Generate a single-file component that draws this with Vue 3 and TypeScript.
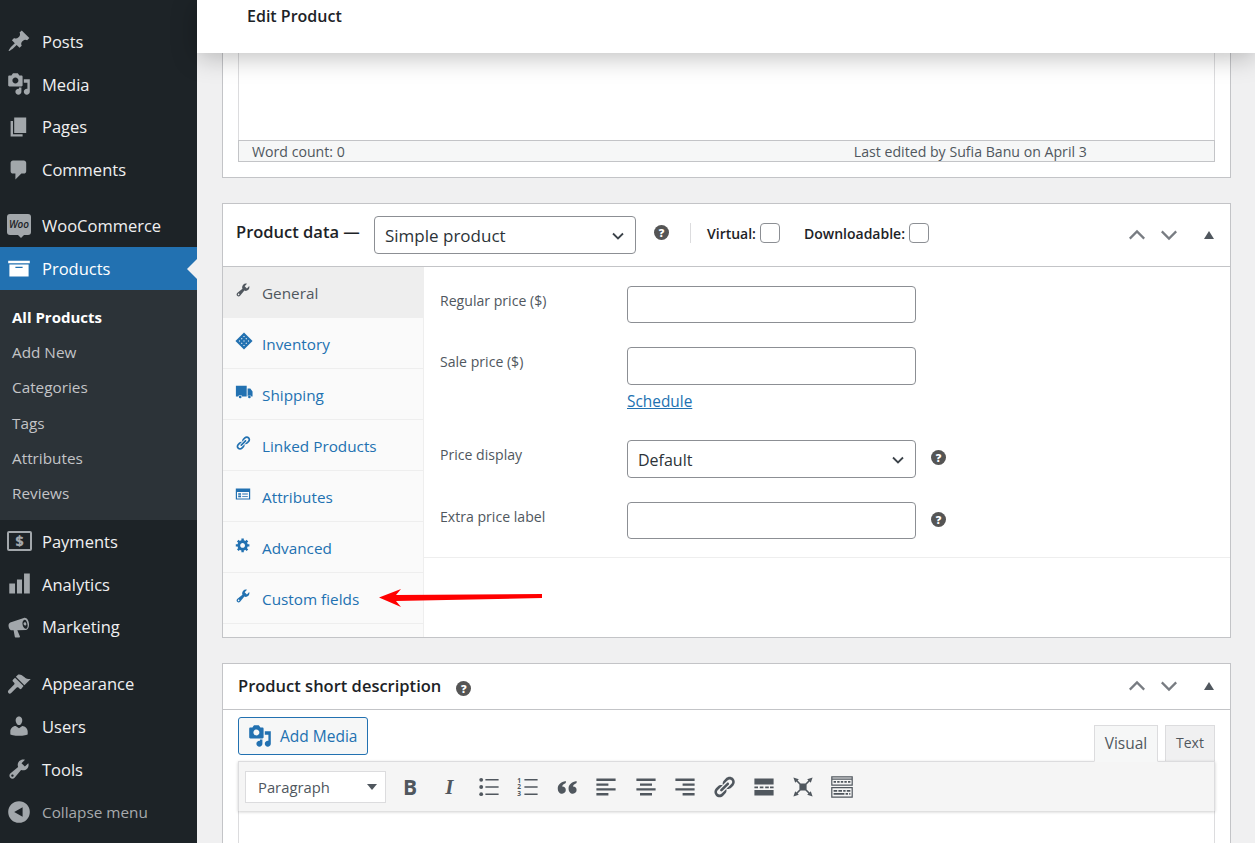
<script setup lang="ts">
const P = {
  pin: 'M10.44 3.02l1.82-1.82 6.36 6.35-1.83 1.82c-1.05-.68-2.48-.57-3.41.36l-.75.75c-.92.93-1.04 2.35-.35 3.41l-1.83 1.82-2.41-2.41-2.8 2.79c-.42.42-3.38 2.71-3.8 2.29s1.86-3.39 2.28-3.81l2.79-2.79L4.1 9.36l1.83-1.82c1.05.69 2.48.57 3.4-.36l.75-.75c.93-.92 1.05-2.35.36-3.41z',
  media: 'M13 11V4c0-.55-.45-1-1-1h-1.67L9 1H5L3.67 3H2c-.55 0-1 .45-1 1v7c0 .55.45 1 1 1h10c.55 0 1-.45 1-1zM7 4.5c1.38 0 2.5 1.12 2.5 2.5S8.38 9.5 7 9.5 4.5 8.38 4.5 7 5.62 4.5 7 4.5zM14 6h5v10.5c0 1.38-1.12 2.5-2.5 2.5S14 17.88 14 16.5s1.12-2.5 2.5-2.5c.17 0 .34.02.5.05V9h-3V6zm-4 8.05V13h2v3.5c0 1.38-1.12 2.5-2.5 2.5S7 17.88 7 16.5 8.12 14 9.5 14c.17 0 .34.02.5.05z',
  page: 'M6 15V2h10v13H6zm-1 1h8v2H3V5h2v11z',
  comment: 'M5 2h9c1.1 0 2 .9 2 2v7c0 1.1-.9 2-2 2h-2l-5 5v-5H5c-1.1 0-2-.9-2-2V4c0-1.1.9-2 2-2z',
  archive: 'M19 4v2H1V4h18zM2 7h16v10H2V7zm11 3V9H7v1h6z',
  bars: 'M1.900 9.600h4.800V18H1.900zM8.300 6.200h4.200V18H8.300zM14.200 1.200H19V18h-4.800z',
  megaphone: 'M14 2.500c2.400-.7 4 2 4.300 4.600.3 2.400-.6 5-2.600 5.500L8.600 12.700l2.200 5.300c.1.400-.2.700-.5.700H7.100c-.3 0-.6-.3-.6-.6l-1-5.300H4.200c-1.300 0-2.400-1.200-2.800-2.900-.4-1.700.2-3.100 1.300-3.600zM14.600 4c-1.500.4-2.100 2.300-1.500 4.600.6 2.200 2 3.400 3 2.800 1-.6 1.400-2.200.9-4.200-.5-2.100-1.400-3.400-2.400-3.200zm.1 2c.8-.2 1.300.4 1.400 1.200.1.800-.2 1.400-.9 1.600-.7.1-1.200-.4-1.400-1.200-.1-.8.2-1.400.9-1.600z',
  brush: 'M14.48 11.06L7.41 3.99l1.5-1.5c.5-.56 2.3-.47 3.51.32 1.21.8 1.43 1.28 2.91 2.1 1.18.64 2.45 1.26 4.45.85zm-.71.71L6.7 4.7 4.93 6.47c-.39.39-.39 1.02 0 1.41l1.06 1.06c.39.39.39 1.03 0 1.42L1.3 15.3c-.7.7-.7 1.6-.1 2.3s1.6.6 2.3-.1l4.61-4.54c.39-.39 1.03-.39 1.42 0l1.06 1.06c.39.39 1.02.39 1.41 0z',
  users: 'M10 9.25c-2.27 0-2.73-3.44-2.73-3.44C7 4.02 7.82 2 9.97 2c2.16 0 2.98 2.02 2.71 3.81 0 0-.41 3.44-2.68 3.44zm0 2.57L12.72 10c2.39 0 4.52 2.33 4.52 4.53v2.49s-3.65 1.13-7.24 1.13c-3.65 0-7.24-1.13-7.24-1.13v-2.49c0-2.25 1.94-4.48 4.47-4.48z',
  tools: 'M16.68 9.77c-1.34 1.34-3.3 1.67-4.95.99l-5.41 6.52c-.99.99-2.59.99-3.58 0s-.99-2.59 0-3.57l6.52-5.42c-.68-1.65-.35-3.61.99-4.95 1.28-1.28 3.12-1.62 4.72-1.06l-2.89 2.89 2.82 2.82 2.86-2.87c.53 1.58.18 3.39-1.08 4.65zM3.81 16.21c.4.39 1.04.39 1.43 0 .4-.4.4-1.04 0-1.43-.39-.4-1.03-.4-1.43 0-.39.39-.39 1.03 0 1.43z',
  link: 'M17.74 2.76c1.68 1.69 1.68 4.41 0 6.1l-1.53 1.52c-1.12 1.12-2.7 1.47-4.14 1.09l2.62-2.61.76-.77.76-.76c.84-.84.84-2.2 0-3.04-.84-.85-2.2-.85-3.04 0l-.77.76-3.38 3.38c-.37-1.44-.02-3.02 1.1-4.14l1.52-1.53c1.69-1.68 4.42-1.68 6.1 0zM8.59 13.43l5.34-5.34c.42-.42.42-1.1 0-1.52-.44-.43-1.13-.39-1.53 0l-5.33 5.34c-.42.42-.42 1.1 0 1.52.44.43 1.13.39 1.52 0zm-.76 2.29l4.14-4.15c.38 1.44.03 3.02-1.09 4.14l-1.52 1.53c-1.69 1.68-4.41 1.68-6.1 0-1.68-1.68-1.68-4.42 0-6.1l1.53-1.52c1.12-1.12 2.7-1.47 4.14-1.1l-4.14 4.15c-.85.84-.85 2.2 0 3.05.84.84 2.2.84 3.04 0z',
  gear: 'M18 12h-2.18c-.17.7-.44 1.35-.81 1.93l1.54 1.54-2.1 2.1-1.54-1.54c-.58.36-1.23.63-1.91.79V19H8v-2.18c-.68-.16-1.33-.43-1.91-.79l-1.54 1.54-2.12-2.12 1.54-1.54c-.36-.58-.63-1.23-.79-1.91H1V9.03h2.17c.16-.7.44-1.35.8-1.94L2.43 5.55l2.1-2.1 1.54 1.54c.58-.37 1.24-.64 1.93-.81V2h3v2.18c.68.16 1.33.43 1.91.79l1.54-1.54 2.12 2.12-1.54 1.54c.36.59.64 1.24.8 1.94H18V12zm-8.5 1.5c1.66 0 3-1.34 3-3s-1.34-3-3-3-3 1.34-3 3 1.34 3 3 3z',
  truck: 'M1 3h12v12H8a2.300 2.300 0 0 0-4.400 0H1zM14 6h3l2.500 3.500V15h-1.300a2.300 2.300 0 0 0-4.200 0zM5.800 14a1.500 1.500 0 1 1 0 3 1.500 1.500 0 0 1 0-3zM16 14a1.500 1.500 0 1 1 0 3 1.500 1.500 0 0 1 0-3z',
  attrs: 'M1 3h18v14H1zM2.500 7.500v8h15v-8zM4 9h3.500v2H4zM4 12h3.500v2H4zM9 9.500h7v1H9zM9 12.500h7v1H9z',
  collapse: 'M10 1a9 9 0 1 1 0 18 9 9 0 0 1 0-18zM13 6l-7 4 7 4z'
}

// Inventory glyph: a solid diamond pierced by a grid of small cells.
const cellHoles: string[] = []
for (let a = -1; a <= 1; a++) {
  for (let b = -1; b <= 1; b++) {
    const x = 10 + (a + b) * 2.5
    const y = 10 + (a - b) * 2.5
    cellHoles.push(`M${x} ${y - 0.9}L${x + 0.9} ${y}L${x} ${y + 0.9}L${x - 0.9} ${y}z`)
  }
}
const inventory = `M10 .5L19.500 10L10 19.500L.5 10z${cellHoles.join('')}`

interface MenuItem { label: string; icon?: string; kind?: string; gap?: boolean }
const topMenu: MenuItem[] = [
  { label: 'Posts', icon: P.pin },
  { label: 'Media', icon: P.media },
  { label: 'Pages', icon: P.page },
  { label: 'Comments', icon: P.comment }
]
const lowerMenu: MenuItem[] = [
  { label: 'Payments', kind: 'pay' },
  { label: 'Analytics', icon: P.bars },
  { label: 'Marketing', icon: P.megaphone },
  { label: 'Appearance', icon: P.brush, gap: true },
  { label: 'Users', icon: P.users },
  { label: 'Tools', icon: P.tools }
]
const subMenu = ['All Products', 'Add New', 'Categories', 'Tags', 'Attributes', 'Reviews']
const tabs = [
  { label: 'General', icon: P.tools, active: true },
  { label: 'Inventory', icon: inventory, big: true },
  { label: 'Shipping', icon: P.truck, big: true },
  { label: 'Linked Products', icon: P.link },
  { label: 'Attributes', icon: P.attrs },
  { label: 'Advanced', icon: P.gear },
  { label: 'Custom fields', icon: P.tools }
]
const alignIcons = [
  'M2 3h16v2H2zM2 7h10v2H2zM2 11h16v2H2zM2 15h10v2H2z',
  'M2 3h16v2H2zM5 7h10v2H5zM2 11h16v2H2zM5 15h10v2H5z',
  'M2 3h16v2H2zM8 7h10v2H8zM2 11h16v2H2zM8 15h10v2H8z'
]
</script>

<template>
  <div class="page">
    <aside class="side">
      <div v-for="m in topMenu" :key="m.label" class="item">
        <svg class="ico" viewBox="0 0 20 20"><path :d="m.icon" /></svg>
        <span>{{ m.label }}</span>
      </div>
      <div class="item woo-item">
        <span class="woo">Woo</span>
        <span>WooCommerce</span>
      </div>
      <div class="item current">
        <svg class="ico" viewBox="0 0 20 20"><path :d="P.archive" /></svg>
        <span>Products</span>
      </div>
      <div class="sub">
        <div v-for="(s, i) in subMenu" :key="s" class="sub-item" :class="{ strong: i === 0 }">{{ s }}</div>
      </div>
      <div v-for="m in lowerMenu" :key="m.label" class="item" :class="{ gap: m.gap }">
        <span v-if="m.kind === 'pay'" class="pay">$</span>
        <svg v-else class="ico" viewBox="0 0 20 20"><path :d="m.icon" /></svg>
        <span>{{ m.label }}</span>
      </div>
      <div class="item collapse">
        <svg class="ico" viewBox="0 0 20 20"><path fill-rule="evenodd" :d="P.collapse" /></svg>
        <span>Collapse menu</span>
      </div>
    </aside>

    <main class="main">
      <header class="topbar">Edit Product</header>
      <div class="content">
        <section class="card first">
          <div class="editor-tail">
            <div class="editor-blank"></div>
            <div class="status">
              <span>Word count: 0</span>
              <span class="edited">Last edited by Sufia Banu on April 3</span>
            </div>
          </div>
        </section>

        <section class="card data">
          <div class="data-head">
            <strong class="data-title">Product data —</strong>
            <div class="select type-select">
              <span>Simple product</span>
              <svg class="chev" viewBox="0 0 16 16"><path d="M3 5.500l5 5 5-5" /></svg>
            </div>
            <span class="help head-help">?</span>
            <span class="divider"></span>
            <span class="check-label">Virtual:</span>
            <span class="check"></span>
            <span class="check-label dl">Downloadable:</span>
            <span class="check"></span>
            <div class="controls">
              <svg class="arrow" viewBox="0 0 20 20"><path d="M2 14l8-8 8 8" /></svg>
              <svg class="arrow" viewBox="0 0 20 20"><path d="M2 6l8 8 8-8" /></svg>
              <span class="tri"></span>
            </div>
          </div>
          <div class="data-body">
            <ul class="tabs">
              <li v-for="t in tabs" :key="t.label" class="tab" :class="{ active: t.active }">
                <svg class="tab-ico" :class="{ big: t.big }" viewBox="0 0 20 20"><path fill-rule="evenodd" :d="t.icon" /></svg>
                <span>{{ t.label }}</span>
              </li>
            </ul>
            <div class="panel">
              <div class="fields">
                <div class="field">
                  <label>Regular price ($)</label>
                  <div class="input"></div>
                </div>
                <div class="field sale">
                  <label>Sale price ($)</label>
                  <div class="stack">
                    <div class="input tall"></div>
                    <a class="schedule">Schedule</a>
                  </div>
                </div>
                <div class="field price">
                  <label>Price display</label>
                  <div class="select price-select">
                    <span>Default</span>
                    <svg class="chev" viewBox="0 0 16 16"><path d="M3 5.500l5 5 5-5" /></svg>
                  </div>
                  <span class="help">?</span>
                </div>
                <div class="field extra">
                  <label>Extra price label</label>
                  <div class="input"></div>
                  <span class="help">?</span>
                </div>
              </div>
            </div>
            <svg class="red-arrow" viewBox="0 0 170 24">
              <path d="M5 11.500L27 3l-5 6L168 8v4L22 15l5 6z" fill="#f00" />
            </svg>
          </div>
        </section>

        <section class="card short">
          <div class="short-head">
            <strong class="short-title">Product short description</strong>
            <span class="help short-help">?</span>
            <div class="controls">
              <svg class="arrow" viewBox="0 0 20 20"><path d="M2 14l8-8 8 8" /></svg>
              <svg class="arrow" viewBox="0 0 20 20"><path d="M2 6l8 8 8-8" /></svg>
              <span class="tri"></span>
            </div>
          </div>
          <div class="short-body">
            <div class="media-row">
              <div class="add-media">
                <svg viewBox="0 0 20 20"><path :d="P.media" /></svg>
                <span>Add Media</span>
              </div>
              <div class="mode-tabs">
                <span class="mode on">Visual</span>
                <span class="mode">Text</span>
              </div>
            </div>
            <div class="toolbar">
              <div class="format">
                <span>Paragraph</span>
                <i class="fmt-tri"></i>
              </div>
              <div class="tools">
                <span class="tool bold">B</span>
                <span class="tool ital">I</span>
                <svg class="tool" viewBox="0 0 20 20">
                  <circle cx="3.500" cy="4" r="1.600" /><circle cx="3.500" cy="10" r="1.600" /><circle cx="3.500" cy="16" r="1.600" />
                  <path d="M7 3.400h11v1.200H7zM7 9.400h11v1.200H7zM7 15.400h11v1.200H7z" />
                </svg>
                <svg class="tool" viewBox="0 0 20 20">
                  <text x="1" y="6.500" class="num">1</text><text x="1" y="12" class="num">2</text><text x="1" y="17.500" class="num">3</text>
                  <path d="M7 3.400h11v1.200H7zM7 9.400h11v1.200H7zM7 15.400h11v1.200H7z" />
                </svg>
                <svg class="tool" viewBox="0 0 20 20">
                  <path d="M9 5v1.600C6.800 7.600 6 8.600 6 9.600c2 0 3 1.200 3 3s-1.300 3-3 3c-2.200 0-3.700-1.800-3.700-4.400C2.300 8.200 4.800 5.600 9 5zM18 5v1.600c-2.200 1-3 2-3 3 2 0 3 1.200 3 3s-1.300 3-3 3c-2.200 0-3.700-1.800-3.700-4.400C11.300 8.200 13.800 5.600 18 5z" />
                </svg>
                <svg v-for="a in alignIcons" :key="a" class="tool" viewBox="0 0 20 20"><path :d="a" /></svg>
                <svg class="tool" viewBox="0 0 20 20"><path :d="P.link" /></svg>
                <svg class="tool" viewBox="0 0 20 20">
                  <path d="M2 3h16v5H2zM2 9.500h3v1.500H2zM6.500 9.500h3v1.500h-3zM11 9.500h3v1.500h-3zM15 9.500h3v1.500h-3zM2 12.500h16V17H2z" />
                </svg>
                <svg class="tool" viewBox="0 0 20 20">
                  <path d="M7 7h6v6H7zM2 2l4.500 1.500-1 1 2.500 2.500-1 1-2.500-2.500-1 1zM18 2l-1.500 4.500-1-1-2.500 2.500-1-1 2.500-2.500-1-1zM2 18l1.500-4.500 1 1 2.500-2.500 1 1-2.500 2.500 1 1zM18 18l-4.500-1.500 1-1-2.500-2.500 1-1 2.500 2.500 1-1z" />
                </svg>
                <svg class="tool" viewBox="0 0 20 20">
                  <path fill-rule="evenodd" d="M1 1h18v8H1zM2 2v1h16V2zM2 4v4h16V4zM3 5h2v1.500H3zM6 5h2v1.500H6zM9 5h2v1.500H9zM12 5h2v1.500h-2zM15 5h2v1.500h-2zM1 10h18v9H1zM2 11v7h16v-7zM3 12.500h3V14H3zM7 12.500h3V14H7zM11 12.500h2V14h-2zM14 12.500h3V14h-3zM3 15h9v1.500H3zM13 15h2v1.500h-2zM16 15h1v1.500h-1z" />
                </svg>
              </div>
            </div>
            <div class="edit-area"></div>
          </div>
        </section>
      </div>
    </main>
  </div>
</template>

<style>
html, body { margin: 0; overflow: hidden; background: #f0f0f1; }
</style>

<style scoped>
* { box-sizing: border-box; }
.page {
  display: flex;
  width: 1255px;
  height: 843px;
  overflow: hidden;
  font-family: "Open Sans", "Noto Sans", sans-serif;
  color: #3c434a;
  background: #f0f0f1;
}
.side {
  width: 197px;
  flex: none;
  background: #1d2327;
  padding-top: 20px;
  color: #f0f0f1;
  font-size: 16.500px;
}
.item {
  position: relative;
  display: flex;
  align-items: center;
  height: 42.750px;
  padding-left: 7px;
  gap: 11px;
}
.ico { width: 24px; height: 24px; fill: #a2a7ab; flex: none; }
.woo-item { margin-top: 13px; padding-top: 1px; }
.woo {
  position: relative;
  width: 24px;
  height: 21px;
  margin-top: -2px;
  flex: none;
  border-radius: 3px;
  background: #a2a7ab;
  color: #1d2327;
  font-size: 10px;
  font-weight: 600;
  font-style: italic;
  line-height: 21px;
  text-align: center;
}
.woo::after {
  content: "";
  position: absolute;
  left: 11px;
  bottom: -3px;
  border: 3px solid transparent;
  border-bottom: 0;
  border-top-color: #a2a7ab;
}
.current { height: 43.250px; background: #2271b1; color: #fff; }
.current .ico { fill: #fff; }
.current::after {
  content: "";
  position: absolute;
  right: 0;
  top: 12px;
  border: 10px solid transparent;
  border-right-color: #f0f0f1;
  border-left-width: 0;
}
.sub { height: 230px; padding: 10px 0 8.800px; background: #2c3338; }
.sub-item {
  height: 35.200px;
  line-height: 35.200px;
  padding-left: 12px;
  font-size: 15.300px;
  color: #c3c4c7;
}
.strong { color: #fff; font-weight: 700; font-size: 15px; }
.pay {
  width: 25px;
  height: 20px;
  flex: none;
  margin-right: -1px;
  border: 2px solid #a2a7ab;
  border-radius: 2px;
  color: #a2a7ab;
  font-size: 14px;
  font-weight: 800;
  line-height: 16px;
  text-align: center;
}
.gap { margin-top: 14px; }
.collapse { color: #a7aaad; font-size: 15.300px; }

.main { flex: 1; min-width: 0; display: flex; flex-direction: column; }
.topbar {
  position: relative;
  z-index: 2;
  height: 53px;
  flex: none;
  background: #fff;
  padding: 5px 0 0 50px;
  font-size: 16px;
  font-weight: 600;
  color: #1d2327;
  box-shadow: 0 4px 26px rgba(0, 0, 0, .26);
}
.content { padding: 0 24px 0 25px; }
.card { background: #fff; border: 1px solid #c3c4c7; }
.first { border-top: 0; padding: 0 15px 15px; }
.editor-tail { border: 1px solid #dcdcde; border-top: 0; }
.editor-blank { height: 87px; }
.status {
  display: flex;
  height: 22px;
  align-items: center;
  padding-left: 13px;
  background: #f6f7f7;
  border: 1px solid #c3c4c7;
  margin: 0 -1px -1px;
  font-size: 14.150px;
  color: #50575e;
}
.edited { margin-left: 509px; }

.data { margin-top: 25px; }
.data-head {
  display: flex;
  align-items: center;
  height: 63px;
  padding: 0 13px;
  border-bottom: 1px solid #c3c4c7;
}
.data-title { width: 138px; flex: none; font-size: 16.500px; font-weight: 600; color: #1d2327; margin-top: -7px; }
.select {
  display: flex;
  align-items: center;
  justify-content: space-between;
  border: 1px solid #8c8f94;
  border-radius: 4px;
  background: #fff;
  padding: 1px 9px 0 10px;
  color: #2c3338;
  font-size: 17px;
}
.type-select { width: 262px; height: 38px; }
.chev { width: 16px; height: 16px; fill: none; stroke: #3c434a; stroke-width: 1.800; }
.help {
  display: inline-flex;
  align-items: center;
  justify-content: center;
  width: 15px;
  height: 15px;
  flex: none;
  border-radius: 50%;
  background: #555;
  color: #fff;
  font-size: 11px;
  font-weight: 800;
  line-height: 1;
}
.head-help { margin: -6px 0 0 18px; }
.divider { width: 1px; height: 20px; background: #dcdcde; margin: -4px 16px 0 21px; }
.check-label { margin-top: -4px; font-size: 14px; font-weight: 600; color: #1d2327; }
.dl { margin-left: 24px; }
.check {
  width: 20px;
  height: 20px;
  margin: -4px 0 0 4px;
  border: 1px solid #8c8f94;
  border-radius: 4px;
  background: #fff;
}
.controls { margin-left: auto; display: flex; align-items: center; }
.arrow { width: 18px; height: 18px; margin-right: 14px; fill: none; stroke: #787c82; stroke-width: 2.500; }
.arrow + .arrow { margin-right: 24px; }
.tri {
  width: 0;
  height: 0;
  margin: 0 3px 0 2px;
  border: 5px solid transparent;
  border-top: 0;
  border-bottom: 8px solid #50575e;
}
.data-body { position: relative; display: flex; height: 370px; }
.tabs {
  width: 201px;
  flex: none;
  margin: 0;
  padding: 0;
  list-style: none;
  background: #fafafa;
  border-right: 1px solid #eee;
}
.tab {
  display: flex;
  align-items: center;
  height: 51px;
  padding: 1px 0 0 12px;
  gap: 11px;
  border-bottom: 1px solid #eee;
  color: #2271b1;
  font-size: 15.300px;
}
.tab-ico { width: 16px; height: 16px; margin-top: -6px; flex: none; fill: #2271b1; }
.tab-ico.big { width: 18px; height: 18px; margin-right: -2px; }
.active { background: #eee; color: #50575e; border-bottom-color: #eee; }
.active .tab-ico { fill: #50575e; }
.panel { flex: 1; }
.fields { padding: 19px 0 18px 16px; border-bottom: 1px solid #eee; }
.field { display: flex; align-items: flex-start; }
.field label { width: 187px; flex: none; padding-top: 5px; font-size: 14.100px; color: #50575e; }
.input { width: 289px; height: 37px; border: 1px solid #8c8f94; border-radius: 4px; background: #fff; }
.tall { height: 38px; }
.sale { margin-top: 24px; }
.schedule { display: block; margin-top: 6px; color: #2271b1; text-decoration: underline; font-size: 15.400px; }
.price { margin-top: 28px; }
.price-select { width: 289px; height: 38px; font-size: 16px; }
.extra { margin-top: 24px; }
.field .help { margin: 10px 0 0 15px; }
.red-arrow { position: absolute; left: 151px; top: 319px; width: 170px; height: 24px; }

.short { margin-top: 25px; height: 400px; }
.short-head { display: flex; align-items: center; height: 46px; padding-left: 15px; padding-right: 13px; border-bottom: 1px solid #c3c4c7; }
.short-title { margin-top: -3px; font-size: 16.500px; font-weight: 600; color: #1d2327; }
.short-help { margin: 4px 0 0 15px; }
.short-head .controls { margin-top: -2px; }
.short-body { padding: 7px 15px 0; }
.media-row { display: flex; justify-content: space-between; align-items: flex-end; height: 44px; }
.add-media {
  display: flex;
  align-items: center;
  gap: 8px;
  width: 130px;
  height: 38px;
  align-self: flex-start;
  padding-left: 9px;
  border: 1px solid #2271b1;
  border-radius: 3px;
  background: #f6f7f7;
  color: #2271b1;
  font-size: 15.500px;
}
.add-media svg { width: 24px; height: 24px; fill: #2271b1; }
.mode-tabs { display: flex; gap: 7px; margin-bottom: -1px; }
.mode {
  width: 50px;
  height: 37px;
  line-height: 34px;
  border: 1px solid #dcdcde;
  background: #f0f0f1;
  font-size: 14px;
  text-align: center;
  color: #50575e;
}
.on {
  width: 64px;
  font-size: 15.500px;
  background: #f6f7f7;
  border-bottom-color: #f6f7f7;
  position: relative;
  z-index: 1;
}
.toolbar {
  display: flex;
  align-items: center;
  height: 50px;
  padding-left: 6px;
  background: #f5f5f5;
  border: 1px solid #dcdcde;
  border-bottom: 0;
  box-shadow: 0 1px 3px rgba(0, 0, 0, .2);
  position: relative;
}
.format {
  display: flex;
  align-items: center;
  justify-content: space-between;
  width: 141px;
  height: 32px;
  padding: 0 8px 0 12px;
  background: #fff;
  border: 1px solid #dcdcde;
  font-size: 14.800px;
  color: #50575e;
}
.fmt-tri { width: 0; height: 0; border: 5px solid transparent; border-bottom: 0; border-top: 6px solid #50575e; }
.tools { display: flex; align-items: center; gap: 15.300px; margin-left: 12px; }
.tool { width: 24px; height: 24px; flex: none; fill: #50575e; text-align: center; color: #50575e; }
.bold { font: 700 21px/24px "Open Sans", sans-serif; }
.ital { font: italic 700 21px/24px "Liberation Serif", serif; }
.num { font: 700 5.500px "Open Sans", sans-serif; }
.edit-area { height: 60px; border: 1px solid #dcdcde; border-top: 0; }
</style>
